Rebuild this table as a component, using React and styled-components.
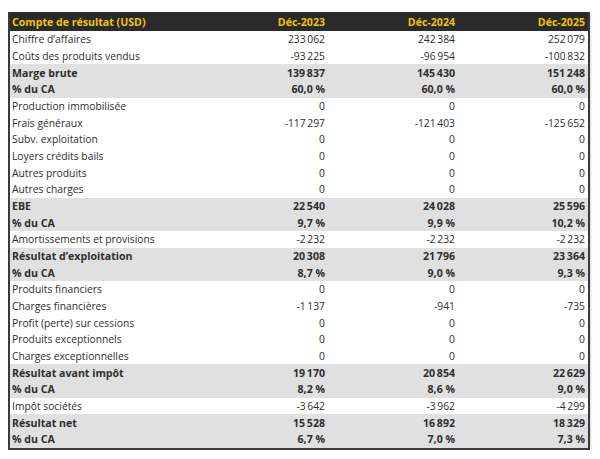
import React from 'react';
import styled, { createGlobalStyle } from 'styled-components';

const GlobalStyle = createGlobalStyle`
  body {
    margin: 0;
    background: #ffffff;
    font-family: "Open Sans", "Liberation Sans", sans-serif;
  }
`;

const Page = styled.div`
  padding: 12px 10px 0 8px;
`;

const Table = styled.div`
  width: 582px;
  box-sizing: border-box;
  border: 2px solid #3a3a3a;
  border-top: none;
  box-shadow: 1px 1px 2px rgba(0, 0, 0, 0.15);
`;

const Row = styled.div`
  display: grid;
  grid-template-columns: 188px 130px 130px 130px;
  height: ${(p) => (p.$head ? '19px' : '16.68px')};
  align-items: center;
  background: ${(p) => (p.$head ? '#2a2a2a' : p.$bold ? '#e0e0e0' : '#ffffff')};
  color: ${(p) => (p.$head ? '#f2c500' : '#2e2e2e')};
  font-weight: ${(p) => (p.$head || p.$bold ? 700 : 400)};
  font-size: ${(p) => (p.$head || p.$bold ? '10.6px' : '10.3px')};
`;

const Label = styled.div`
  padding-left: 2px;
  white-space: nowrap;
`;

const Num = styled.div`
  text-align: right;
  padding-right: 3px;
  white-space: nowrap;
`;

const rows = [
  ['Chiffre d\u2019affaires', '233\u2009062', '242\u2009384', '252\u2009079'],
  ['Coûts des produits vendus', '-93\u2009225', '-96\u2009954', '-100\u2009832'],
  ['Marge brute', '139\u2009837', '145\u2009430', '151\u2009248', true],
  ['% du CA', '60,0 %', '60,0 %', '60,0 %', true],
  ['Production immobilisée', '0', '0', '0'],
  ['Frais généraux', '-117\u2009297', '-121\u2009403', '-125\u2009652'],
  ['Subv. exploitation', '0', '0', '0'],
  ['Loyers crédits bails', '0', '0', '0'],
  ['Autres produits', '0', '0', '0'],
  ['Autres charges', '0', '0', '0'],
  ['EBE', '22\u2009540', '24\u2009028', '25\u2009596', true],
  ['% du CA', '9,7 %', '9,9 %', '10,2 %', true],
  ['Amortissements et provisions', '-2\u2009232', '-2\u2009232', '-2\u2009232'],
  ['Résultat d\u2019exploitation', '20\u2009308', '21\u2009796', '23\u2009364', true],
  ['% du CA', '8,7 %', '9,0 %', '9,3 %', true],
  ['Produits financiers', '0', '0', '0'],
  ['Charges financières', '-1\u2009137', '-941', '-735'],
  ['Profit (perte) sur cessions', '0', '0', '0'],
  ['Produits exceptionnels', '0', '0', '0'],
  ['Charges exceptionnelles', '0', '0', '0'],
  ['Résultat avant impôt', '19\u2009170', '20\u2009854', '22\u2009629', true],
  ['% du CA', '8,2 %', '8,6 %', '9,0 %', true],
  ['Impôt sociétés', '-3\u2009642', '-3\u2009962', '-4\u2009299'],
  ['Résultat net', '15\u2009528', '16\u2009892', '18\u2009329', true],
  ['% du CA', '6,7 %', '7,0 %', '7,3 %', true],
];

const App = () => {
  return (
    <Page>
      <GlobalStyle />
      <Table>
        <Row $head>
          <Label>Compte de résultat (USD)</Label>
          <Num>Déc-2023</Num>
          <Num>Déc-2024</Num>
          <Num>Déc-2025</Num>
        </Row>
        {rows.map(([label, a, b, c, bold], i) => (
          <Row key={i} $bold={bold}>
            <Label>{label}</Label>
            <Num>{a}</Num>
            <Num>{b}</Num>
            <Num>{c}</Num>
          </Row>
        ))}
      </Table>
    </Page>
  );
};

export default App;
